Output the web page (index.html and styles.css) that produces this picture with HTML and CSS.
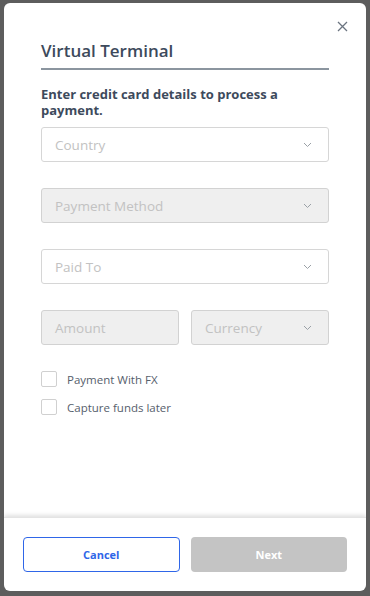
FILE: index.html
```html
<!DOCTYPE html>
<html lang="en">
<head>
    <meta charset="UTF-8">
    <meta name="viewport" content="width=device-width, initial-scale=1.0">
    <title>Virtual Terminal</title>
    <link rel="stylesheet" href="styles.css">
</head>
<body>
    <div class="modal">
        <button class="close-btn" aria-label="Close">
            <svg width="11" height="11" viewBox="0 0 11 11"><path d="M1 1L10 10M10 1L1 10" stroke="#6b7480" stroke-width="1.3" fill="none"/></svg>
        </button>

        <div class="modal-body">
            <h1 class="modal-title">Virtual Terminal</h1>
            <p class="intro">Enter credit card details to process a payment.</p>

            <div class="field select">
                <span class="placeholder">Country</span>
                <svg class="chevron" width="9" height="6" viewBox="0 0 9 6"><path d="M1 1l3.5 3.5L8 1" stroke="#9aa0a6" stroke-width="1" fill="none"/></svg>
            </div>

            <div class="field select disabled">
                <span class="placeholder">Payment Method</span>
                <svg class="chevron" width="9" height="6" viewBox="0 0 9 6"><path d="M1 1l3.5 3.5L8 1" stroke="#9aa0a6" stroke-width="1" fill="none"/></svg>
            </div>

            <div class="field select">
                <span class="placeholder">Paid To</span>
                <svg class="chevron" width="9" height="6" viewBox="0 0 9 6"><path d="M1 1l3.5 3.5L8 1" stroke="#9aa0a6" stroke-width="1" fill="none"/></svg>
            </div>

            <div class="field-row">
                <div class="field disabled">
                    <span class="placeholder">Amount</span>
                </div>
                <div class="field select disabled">
                    <span class="placeholder">Currency</span>
                    <svg class="chevron" width="9" height="6" viewBox="0 0 9 6"><path d="M1 1l3.5 3.5L8 1" stroke="#9aa0a6" stroke-width="1" fill="none"/></svg>
                </div>
            </div>

            <div class="checks">
                <label class="check"><span class="box"></span>Payment With FX</label>
                <label class="check"><span class="box"></span>Capture funds later</label>
            </div>
        </div>

        <footer class="modal-footer">
            <button class="btn btn-outline">Cancel</button>
            <button class="btn btn-disabled">Next</button>
        </footer>
    </div>
</body>
</html>
```

FILE: styles.css
```css
/* Global styles */
:root {
    --text-color: #3d4a5c;
    --muted-color: #c2c2c2;
    --border-color: #d6d6d6;
    --disabled-bg: #efefef;
    --blue: #2f66e8;
}

html, body {
    height: 100%;
}

body {
    margin: 0;
    padding: 3px 4px 5px;
    box-sizing: border-box;
    background: #5d5d5d;
    font-family: 'Open Sans', 'Liberation Sans', sans-serif;
    color: var(--text-color);
}

/* Modal */
.modal {
    position: relative;
    height: 100%;
    background: #ffffff;
    border-radius: 6px;
    display: flex;
    flex-direction: column;
    overflow: hidden;
}

.close-btn {
    position: absolute;
    top: 18px;
    right: 18px;
    width: 11px;
    height: 11px;
    padding: 0;
    border: 0;
    background: none;
    display: flex;
}

.modal-body {
    flex: 1;
    padding: 36px 37px 0;
}

.modal-title {
    margin: 0;
    font-size: 17px;
    font-weight: 600;
    line-height: 24px;
    padding-bottom: 5px;
    border-bottom: 2px solid #8b959f;
}

.intro {
    margin: 16px 0 9px;
    font-size: 13px;
    font-weight: 700;
    line-height: 16px;
    padding-right: 30px;
}

/* Fields */
.field {
    height: 35px;
    box-sizing: border-box;
    border: 1px solid var(--border-color);
    border-radius: 3px;
    padding: 0 14px 0 13px;
    display: flex;
    align-items: center;
    justify-content: space-between;
    margin-bottom: 26px;
    background: #ffffff;
}

.field + .field {
    margin-bottom: 26px;
}

.field.disabled {
    background: var(--disabled-bg);
    border-color: #d2d2d2;
}

.placeholder {
    font-size: 13.5px;
    color: var(--muted-color);
}

.chevron {
    margin-right: 2px;
}

.field-row {
    display: grid;
    grid-template-columns: 1fr 1fr;
    gap: 12px;
}

.field-row .field {
    margin-bottom: 0;
}

/* Checkboxes */
.checks {
    margin-top: 26px;
    display: flex;
    flex-direction: column;
    gap: 12px;
}

.check {
    display: flex;
    align-items: center;
    gap: 10px;
    font-size: 11.5px;
    color: #56606c;
}

.box {
    width: 16px;
    height: 16px;
    box-sizing: border-box;
    border: 1px solid #d0d0d0;
    border-radius: 2px;
}

/* Footer */
.modal-footer {
    height: 74px;
    box-sizing: border-box;
    padding: 19px 19px 0;
    display: grid;
    grid-template-columns: 1fr 1fr;
    align-items: start;
    gap: 11px;
    box-shadow: 0 -2px 4px rgba(0, 0, 0, 0.12);
    border-top: 1px solid #e4e4e4;
}

.btn {
    height: 35px;
    border-radius: 4px;
    font-family: inherit;
    font-size: 11px;
    font-weight: 700;
}

.btn-outline {
    background: #ffffff;
    border: 1px solid var(--blue);
    color: var(--blue);
}

.btn-disabled {
    background: #c4c4c4;
    border: 0;
    color: #ffffff;
}
```
